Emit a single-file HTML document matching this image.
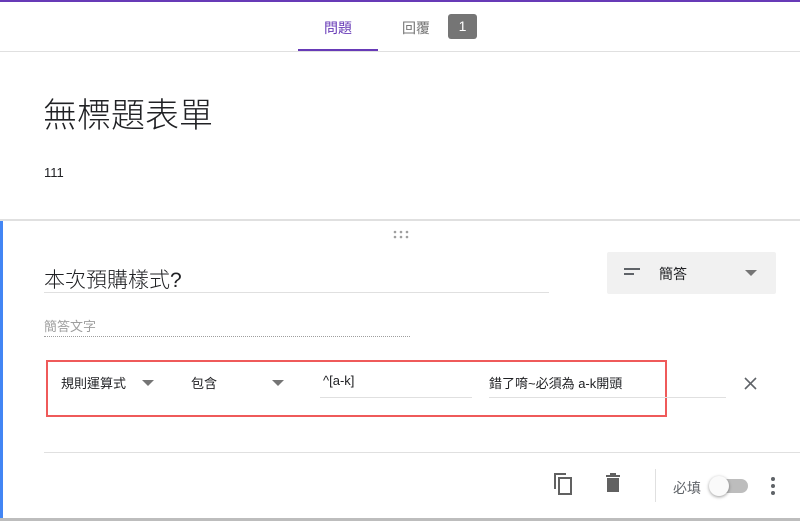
<!DOCTYPE html><html><head><meta charset="utf-8"><style>
body{margin:0;width:800px;height:521px;overflow:hidden;background:#fff;font-family:"Liberation Sans","Noto Sans CJK TC",sans-serif;position:relative}
.a{position:absolute}
</style></head><body>
<div class="a" style="left:0;top:0;width:800px;height:2px;background:#673ab7"></div>
<div class="a" style="left:324px;top:18px;font-size:14px;color:#673ab7">問題</div>
<div class="a" style="left:402px;top:18px;font-size:14px;color:#757575">回覆</div>
<div class="a" style="left:448px;top:14px;width:29px;height:25px;background:#757575;border-radius:3px;color:#fff;font-size:14px;text-align:center;line-height:25px">1</div>
<div class="a" style="left:298px;top:49px;width:80px;height:2px;background:#673ab7"></div>
<div class="a" style="left:0;top:51px;width:800px;height:1px;background:#e0e0e0"></div>
<div class="a" style="left:43px;top:88px;font-size:34px;font-weight:300;color:#202124">無標題表單</div>
<div class="a" style="left:44px;top:165px;font-size:13px;color:#202124">111</div>
<div class="a" style="left:0;top:219px;width:800px;height:2px;background:#e0e0e0"></div>
<div class="a" style="left:0;top:221px;width:3px;height:298px;background:#4285f4"></div>
<div class="a" style="left:0;top:518px;width:800px;height:3px;background:#bdbdbd"></div>
<svg class="a" style="left:393px;top:230px" width="16" height="10"><g fill="#9e9e9e"><circle cx="2" cy="2" r="1.3"/><circle cx="8" cy="2" r="1.3"/><circle cx="14" cy="2" r="1.3"/><circle cx="2" cy="7" r="1.3"/><circle cx="8" cy="7" r="1.3"/><circle cx="14" cy="7" r="1.3"/></g></svg>
<div class="a" style="left:44px;top:264px;font-size:21px;color:#202124;font-weight:300">本次預購樣式?</div>
<div class="a" style="left:44px;top:292px;width:505px;height:1px;background:#e0e0e0"></div>
<div class="a" style="left:607px;top:252px;width:169px;height:42px;background:#f1f1f1;border-radius:2px"></div>
<div class="a" style="left:624px;top:268px;width:16px;height:2px;background:#5f6368"></div>
<div class="a" style="left:624px;top:273px;width:10px;height:2px;background:#5f6368"></div>
<div class="a" style="left:659px;top:264px;font-size:14px;color:#202124">簡答</div>
<div class="a" style="left:745px;top:270px;border:6px solid transparent;border-top:6px solid #757575;border-bottom:0"></div>
<div class="a" style="left:44px;top:316px;font-size:13px;color:#9e9e9e">簡答文字</div>
<div class="a" style="left:44px;top:336px;width:366px;border-top:1px dotted #9e9e9e"></div>
<div class="a" style="left:46px;top:360px;width:617px;height:53px;border:2px solid #ef5a5a"></div>
<div class="a" style="left:61px;top:373px;font-size:13px;color:#202124">規則運算式</div>
<div class="a" style="left:142px;top:380px;border:6px solid transparent;border-top:6px solid #757575;border-bottom:0"></div>
<div class="a" style="left:191px;top:373px;font-size:13px;color:#202124">包含</div>
<div class="a" style="left:272px;top:380px;border:6px solid transparent;border-top:6px solid #757575;border-bottom:0"></div>
<div class="a" style="left:323px;top:373px;font-size:13px;color:#202124">^[a-k]</div>
<div class="a" style="left:320px;top:397px;width:152px;height:1px;background:#e0e0e0"></div>
<div class="a" style="left:489px;top:373px;font-size:13px;color:#202124">錯了唷~必須為 a-k開頭</div>
<div class="a" style="left:489px;top:397px;width:237px;height:1px;background:#e0e0e0"></div>
<svg class="a" style="left:744px;top:377px" width="13" height="13"><path d="M1 1L12 12M12 1L1 12" stroke="#5f6368" stroke-width="1.6"/></svg>
<div class="a" style="left:44px;top:452px;width:756px;height:1px;background:#e0e0e0"></div>
<svg class="a" style="left:553px;top:472px" width="22" height="24"><path d="M2 2h11" stroke="#616161" stroke-width="2" fill="none"/><path d="M2 1v16" stroke="#616161" stroke-width="2"/><rect x="6" y="6" width="12" height="16" fill="none" stroke="#616161" stroke-width="2"/></svg>
<svg class="a" style="left:605px;top:473px" width="16" height="20"><rect x="1" y="2" width="14" height="2" fill="#616161"/><rect x="5" y="0" width="6" height="2" fill="#616161"/><rect x="2" y="5" width="12" height="14" fill="#616161"/></svg>
<div class="a" style="left:655px;top:469px;width:1px;height:33px;background:#e0e0e0"></div>
<div class="a" style="left:673px;top:478px;font-size:14px;color:#5f6368">必填</div>
<div class="a" style="left:714px;top:479px;width:34px;height:14px;border-radius:7px;background:#bdbdbd"></div>
<div class="a" style="left:709px;top:476px;width:20px;height:20px;border-radius:50%;background:#fafafa;box-shadow:0 1px 3px rgba(0,0,0,.4)"></div>
<svg class="a" style="left:770px;top:476px" width="6" height="20"><g fill="#5f6368"><circle cx="3" cy="3" r="2"/><circle cx="3" cy="10" r="2"/><circle cx="3" cy="17" r="2"/></g></svg>
</body></html>
